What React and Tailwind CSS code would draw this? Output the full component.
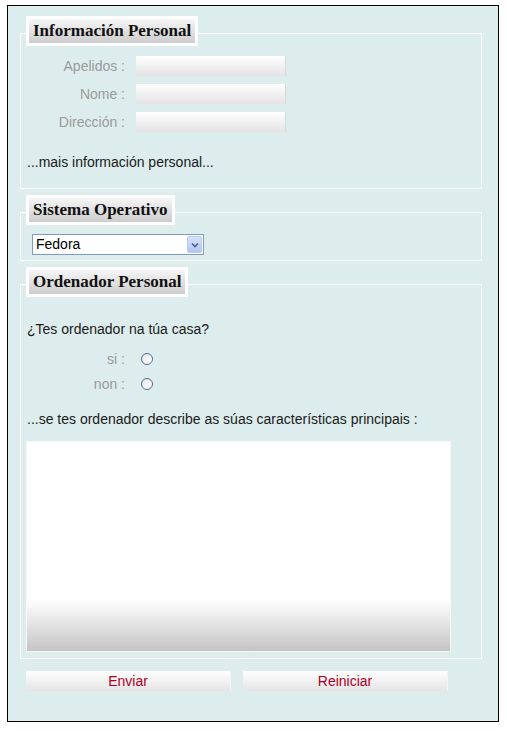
import React from 'react'

const font = { fontFamily: '"Liberation Sans", Arial, sans-serif' }

const Legend = ({ children, mt }) => (
  <div className={`${mt} ml-[5px] self-start border-[3px] border-white`}>
    <div className="h-[24px] px-[4px] flex items-center bg-gradient-to-b from-[#f6f6f6] to-[#cdcdcd] text-[17px] font-bold text-[#111] font-['Liberation_Serif',serif] whitespace-nowrap">
      {children}
    </div>
  </div>
)

const TextInput = () => (
  <div className="w-[150px] h-[20px] bg-gradient-to-b from-white to-[#e4e2e4] border-r border-[#d8d8d8]" />
)

const Row = ({ label, children, className = '' }) => (
  <div className={`flex items-center ${className}`}>
    <div className="w-[104px] text-right text-[14px] leading-[16px] text-[#9a9a9a]">{label}</div>
    {children}
  </div>
)

const Radio = () => (
  <div className="ml-[16px] w-[12px] h-[12px] rounded-full border border-[#4b6c93] bg-gradient-to-br from-[#e6e6e6] to-white" />
)

export default function App() {
  return (
    <div className="p-[5px_0_0_7px]" style={font}>
      <div className="w-[492px] h-[717px] border border-black bg-[#ddeded] pt-[27px] pl-[12px] pr-[16px] flex flex-col text-[#1a1a1a]">
        {/* Información Personal */}
        <div className="border border-white flex flex-col pb-[18px]">
          <Legend mt="-mt-[18px]">Información Personal</Legend>
          <div className="mt-[10px] flex flex-col gap-[8px]">
            <Row label="Apelidos :"><div className="ml-[11px]"><TextInput /></div></Row>
            <Row label="Nome :"><div className="ml-[11px]"><TextInput /></div></Row>
            <Row label="Dirección :"><div className="ml-[11px]"><TextInput /></div></Row>
          </div>
          <div className="mt-[22px] pl-[6px] text-[14px] leading-[16px]">...mais información personal...</div>
        </div>

        {/* Sistema Operativo */}
        <div className="mt-[23px] border border-white flex flex-col pb-[5px]">
          <Legend mt="-mt-[18px]">Sistema Operativo</Legend>
          <div className="mt-[9px] ml-[11px] w-[172px] h-[21px] border border-[#7f9db9] bg-white flex items-center justify-between">
            <span className="pl-[3px] text-[14px] text-black">Fedora</span>
            <div className="w-[15px] h-[17px] mr-[1px] rounded-[2px] bg-gradient-to-b from-[#d6e2fb] to-[#b1c6f2] border border-[#b9cbf1] flex items-center justify-center">
              <svg width="8" height="6" viewBox="0 0 8 6">
                <path d="M1 1.5 L4 4.5 L7 1.5" stroke="#4d6185" strokeWidth="1.6" fill="none" />
              </svg>
            </div>
          </div>
        </div>

        {/* Ordenador Personal */}
        <div className="mt-[23px] border border-white flex flex-col pb-[6px]">
          <Legend mt="-mt-[18px]">Ordenador Personal</Legend>
          <div className="mt-[24px] pl-[6px] text-[14px] leading-[16px]">¿Tes ordenador na túa casa?</div>
          <Row label="si :" className="mt-[14px] h-[16px]"><Radio /></Row>
          <Row label="non :" className="mt-[9px] h-[16px]"><Radio /></Row>
          <div className="mt-[19px] pl-[6px] text-[14px] leading-[16px]">...se tes ordenador describe as súas características principais :</div>
          <div className="mt-[14px] ml-[5px] w-[425px] h-[211px] border border-[#f4f8f8] bg-[linear-gradient(to_bottom,#ffffff_0%,#ffffff_75%,#e2e2e2_88%,#c3c3c5_100%)]" />
        </div>

        {/* Botóns */}
        <div className="mt-[12px] ml-[6px] flex gap-[12px]">
          <div className="w-[205px] h-[20px] bg-gradient-to-b from-white to-[#e6e4e6] border-r border-[#f4f4f4] flex items-center justify-center text-[14px] text-[#b0001e]">Enviar</div>
          <div className="w-[205px] h-[20px] bg-gradient-to-b from-white to-[#e6e4e6] border-r border-[#f4f4f4] flex items-center justify-center text-[14px] text-[#b0001e]">Reiniciar</div>
        </div>
      </div>
    </div>
  )
}
